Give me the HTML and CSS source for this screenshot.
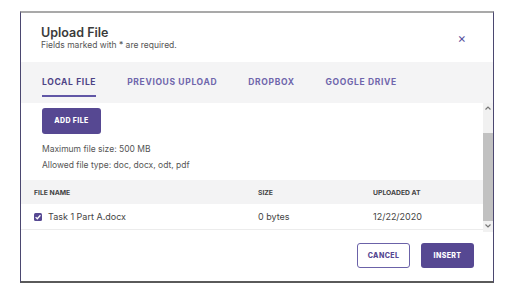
FILE: index.html
```html
<!DOCTYPE html>
<html lang="en">
<head>
    <meta charset="UTF-8">
    <meta name="viewport" content="width=device-width, initial-scale=1.0">
    <title>Upload File</title>
    <link rel="stylesheet" href="styles.css">
</head>
<body>

    <div class="dialog">
        <div class="dialog-header">
            <div>
                <h2>Upload File</h2>
                <p>Fields marked with * are required.</p>
            </div>
            <span class="close">&times;</span>
        </div>

        <div class="tabs">
            <span class="tab active">Local File</span>
            <span class="tab">Previous Upload</span>
            <span class="tab">Dropbox</span>
            <span class="tab">Google Drive</span>
        </div>

        <div class="dialog-body">
            <div class="scroll-content">
                <div class="upload-area">
                    <button class="btn btn-primary add-btn">Add File</button>
                    <p class="hint">Maximum file size: 500 MB</p>
                    <p class="hint">Allowed file type: doc, docx, odt, pdf</p>
                </div>

                <div class="file-table">
                    <div class="table-row table-head">
                        <span>File Name</span>
                        <span>Size</span>
                        <span>Uploaded At</span>
                    </div>
                    <div class="table-row">
                        <span class="file-name">
                            <span class="checkbox">
                                <svg width="8" height="8" viewBox="0 0 8 8"><path d="M1.6 4.1 L3.3 5.7 L6.4 2.3" fill="none" stroke="#fff" stroke-width="1.3"/></svg>
                            </span>
                            Task 1 Part A.docx
                        </span>
                        <span>0 bytes</span>
                        <span>12/22/2020</span>
                    </div>
                </div>
            </div>

            <div class="scrollbar">
                <div class="arrow">
                    <svg width="6" height="4" viewBox="0 0 6 4"><path d="M0.5 3.5 L3 1 L5.5 3.5" fill="none" stroke="#777" stroke-width="1.2"/></svg>
                </div>
                <div class="track"></div>
                <div class="thumb"></div>
                <div class="arrow">
                    <svg width="6" height="4" viewBox="0 0 6 4"><path d="M0.5 0.5 L3 3 L5.5 0.5" fill="none" stroke="#777" stroke-width="1.2"/></svg>
                </div>
            </div>
        </div>

        <div class="dialog-footer">
            <button class="btn btn-outline">Cancel</button>
            <button class="btn btn-primary">Insert</button>
        </div>
    </div>

</body>
</html>
```

FILE: styles.css
```css
body {
    font-family: Inter, "Noto Sans", sans-serif;
    margin: 0;
    padding: 11px 0 0 20px;
    background-color: #fff;
    color: #444;
}

.dialog {
    width: 472px;
    height: 268px;
    border: 1px solid #8d8b9c;
    border-top: 2px solid #a9a9a9;
    border-bottom: 2px solid #5a5a5a;
    border-left-color: #4b4770;
    border-right-color: #4b4770;
    display: flex;
    flex-direction: column;
    background-color: #fff;
}

.dialog-header {
    height: 48px;
    display: flex;
    justify-content: space-between;
    align-items: center;
    padding: 1px 27px 0 20px;
}

.dialog-header h2 {
    margin: 0;
    font-size: 12.5px;
    font-weight: 600;
    color: #3b3b3b;
    line-height: 14px;
}

.dialog-header p {
    margin: 0;
    font-size: 8.5px;
    color: #555;
    line-height: 11px;
}

.close {
    font-size: 13px;
    color: #5b52a0;
    line-height: 1;
}

.tabs {
    height: 41px;
    background-color: #f4f4f5;
    display: flex;
    align-items: stretch;
    padding-left: 21px;
    gap: 31px;
}

.tab {
    display: flex;
    align-items: center;
    font-size: 8.5px;
    font-weight: 700;
    text-transform: uppercase;
    letter-spacing: 0.65px;
    color: #6f66ac;
    border-bottom: 2px solid transparent;
    padding-top: 6px;
    margin-bottom: 6px;
}

.tab.active {
    color: #4d4386;
    border-bottom-color: #6157a6;
}

.dialog-body {
    height: 129px;
    display: flex;
}

.scroll-content {
    flex: 1;
    overflow: hidden;
}

.upload-area {
    padding: 4px 21px 0 21px;
    height: 73px;
}

.btn {
    font-family: inherit;
    font-size: 7px;
    font-weight: 800;
    text-transform: uppercase;
    letter-spacing: 0.4px;
    border-radius: 3px;
    cursor: pointer;
    height: 25px;
    width: 53px;
    padding: 0;
}

.btn-primary {
    background-color: #564892;
    color: #fff;
    border: none;
}

.btn-outline {
    background-color: #fff;
    color: #564892;
    border: 1px solid #6b62a8;
}

.add-btn {
    width: 59px;
    height: 26px;
    margin-bottom: 7px;
}

.hint {
    margin: 0;
    font-size: 8.5px;
    line-height: 16px;
    color: #555;
}

.table-row {
    display: grid;
    grid-template-columns: 224px 115px 1fr;
    align-items: center;
    height: 25px;
    font-size: 9px;
    border-bottom: 1px solid #ececec;
}

.table-row span {
    padding-left: 13px;
}

.table-head {
    height: 24px;
    background-color: #f3f3f4;
    border-bottom: none;
    font-size: 6.8px;
    font-weight: 700;
    text-transform: uppercase;
    color: #444;
}

.file-name {
    display: flex;
    align-items: center;
    gap: 6px;
}

.table-row .checkbox {
    width: 8px;
    height: 8px;
    padding: 0;
    border-radius: 1.5px;
    background-color: #564892;
    display: flex;
}

.scrollbar {
    width: 10px;
    display: flex;
    flex-direction: column;
    background-color: #f1f1f1;
}

.arrow {
    height: 10px;
    display: flex;
    align-items: center;
    justify-content: center;
}

.track {
    height: 20px;
}

.thumb {
    height: 88px;
    background-color: #c1c1c1;
}

.dialog-footer {
    flex: 1;
    display: flex;
    justify-content: flex-end;
    align-items: center;
    gap: 11px;
    padding: 0 19px 2px 0;
}
```
